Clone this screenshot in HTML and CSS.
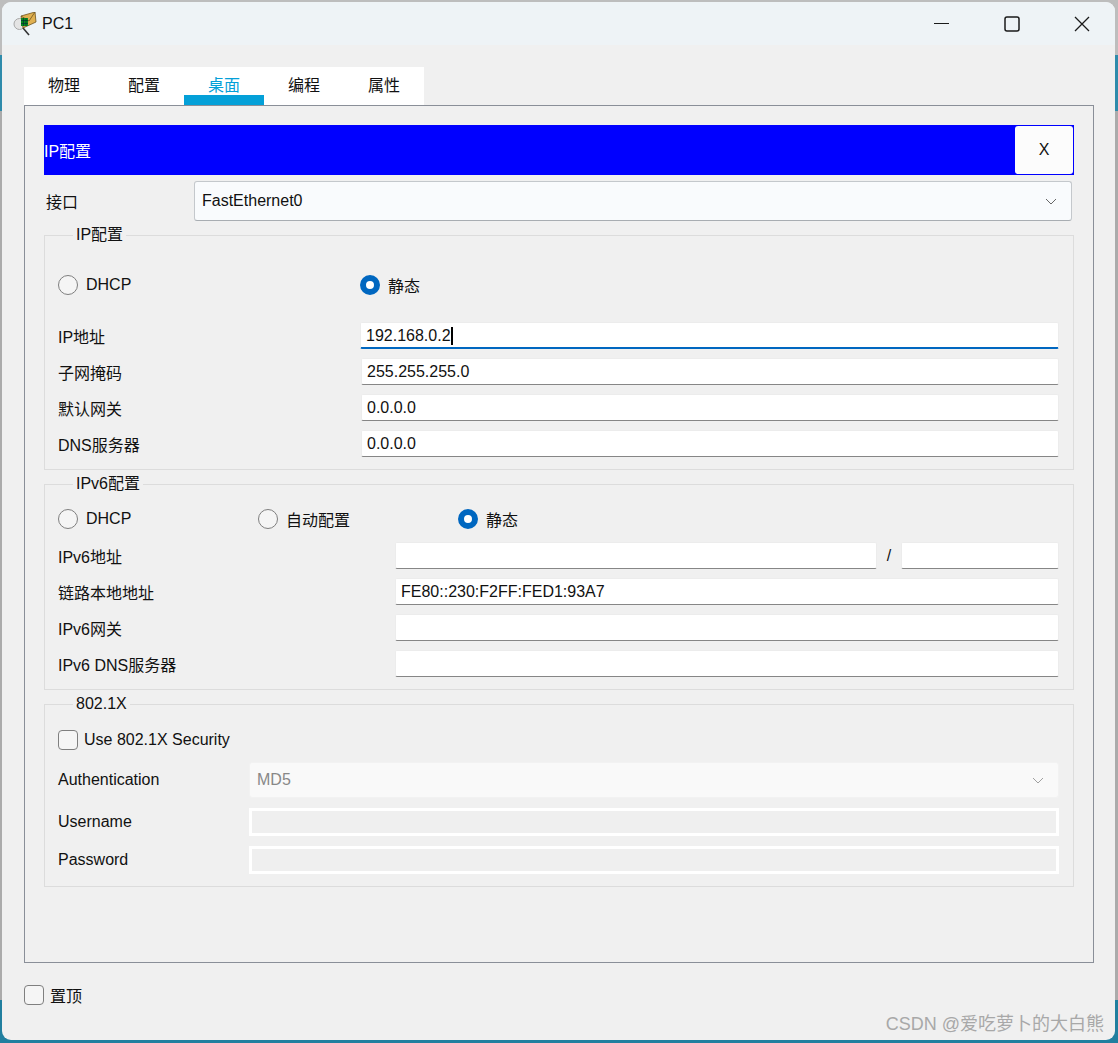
FILE: index.html
```html
<!DOCTYPE html>
<html lang="zh-CN">
<head>
  <meta charset="UTF-8">
  <title>PC1</title>
  <link rel="stylesheet" href="styles.css">
</head>
<body>

  <div class="window">

    <!-- title bar -->
    <div class="titlebar">
      <svg class="app-icon" width="24" height="24" viewBox="0 0 24 24">
        <circle cx="6.5" cy="12" r="5.5" fill="#e4e4e4" stroke="#a8a8a8"/>
        <path d="M10 16l6 7" stroke="#333" stroke-width="1.6"/>
        <path d="M8 4l14-4 1 10-13 6z" fill="#e0b050" stroke="#6d5320" stroke-width="0.8"/>
        <path d="M8 4l8 5 6-9" fill="none" stroke="#6d5320" stroke-width="0.8"/>
        <path d="M8 6h7v8H8z" fill="#0a8a1e"/>
        <path d="M10.5 6v8M13 6v8M8 8.5h7M8 11.5h7" stroke="#033" stroke-width="0.7"/>
      </svg>
      <span class="title">PC1</span>
      <div class="controls">
        <svg width="16" height="16" viewBox="0 0 16 16"><path d="M0 7.5h15" stroke="#1a1a1a" stroke-width="1.2"/></svg>
        <svg width="16" height="16" viewBox="0 0 16 16"><rect x="1" y="1" width="14" height="14" rx="2" fill="none" stroke="#1a1a1a" stroke-width="1.5"/></svg>
        <svg width="16" height="16" viewBox="0 0 16 16"><path d="M1 1l14 14M15 1L1 15" stroke="#1a1a1a" stroke-width="1.3"/></svg>
      </div>
    </div>

    <div class="content">
      <!-- tabs -->
      <div class="tabs">
        <div class="tab">物理</div>
        <div class="tab">配置</div>
        <div class="tab active">桌面</div>
        <div class="tab">编程</div>
        <div class="tab">属性</div>
      </div>

      <div class="panel">
        <div class="bar">
          <span>IP配置</span>
          <div class="bar-close">X</div>
        </div>

        <div class="iface-row">
          <span class="iface-label">接口</span>
          <div class="select iface-select">
            <span>FastEthernet0</span>
            <svg width="12" height="7" viewBox="0 0 12 7"><path d="M1 1l5 5 5-5" fill="none" stroke="#666" stroke-width="1"/></svg>
          </div>
        </div>

        <!-- IPv4 -->
        <fieldset class="group group-ip">
          <legend>IP配置</legend>
          <div class="radios">
            <label class="radio radio-dhcp"><i class="dot"></i>DHCP</label>
            <label class="radio"><i class="dot on"></i>静态</label>
          </div>
          <div class="rows">
            <div class="row">
              <span>IP地址</span>
              <div class="input focused">192.168.0.2<i class="caret"></i></div>
            </div>
            <div class="row">
              <span>子网掩码</span>
              <div class="input">255.255.255.0</div>
            </div>
            <div class="row">
              <span>默认网关</span>
              <div class="input">0.0.0.0</div>
            </div>
            <div class="row">
              <span>DNS服务器</span>
              <div class="input">0.0.0.0</div>
            </div>
          </div>
        </fieldset>

        <!-- IPv6 -->
        <fieldset class="group group-ip6">
          <legend>IPv6配置</legend>
          <div class="radios radios-ip6">
            <label class="radio"><i class="dot"></i>DHCP</label>
            <label class="radio"><i class="dot"></i>自动配置</label>
            <label class="radio"><i class="dot on"></i>静态</label>
          </div>
          <div class="rows">
            <div class="row row-ip6">
              <span>IPv6地址</span>
              <div class="input"></div>
              <span class="slash">/</span>
              <div class="input"></div>
            </div>
            <div class="row row-ip6">
              <span>链路本地地址</span>
              <div class="input wide">FE80::230:F2FF:FED1:93A7</div>
            </div>
            <div class="row row-ip6">
              <span>IPv6网关</span>
              <div class="input wide"></div>
            </div>
            <div class="row row-ip6">
              <span>IPv6 DNS服务器</span>
              <div class="input wide"></div>
            </div>
          </div>
        </fieldset>

        <!-- 802.1X -->
        <fieldset class="group group-dot1x">
          <legend>802.1X</legend>
          <label class="check"><i class="box"></i>Use 802.1X Security</label>
          <div class="auth-row">
            <span>Authentication</span>
            <div class="select disabled">
              <span>MD5</span>
              <svg width="12" height="7" viewBox="0 0 12 7"><path d="M1 1l5 5 5-5" fill="none" stroke="#a0a0a0" stroke-width="1"/></svg>
            </div>
          </div>
          <div class="auth-row short">
            <span>Username</span>
            <div class="input-off"></div>
          </div>
          <div class="auth-row short">
            <span>Password</span>
            <div class="input-off"></div>
          </div>
        </fieldset>
      </div>

      <label class="check footer-check"><i class="box"></i>置顶</label>
    </div>
  </div>

  <div class="watermark">CSDN @爱吃萝卜的大白熊</div>

</body>
</html>
```

FILE: styles.css
```css
html, body { margin: 0; height: 100%; }
body { box-sizing: border-box; width: 1118px; height: 1043px; padding: 2px 3px 3px 2px; overflow: hidden; position: relative; font-family: "Liberation Sans", "Noto Sans CJK SC", sans-serif; font-size: 16px; color: #111; background: linear-gradient(#bdbdbd 0, #bdbdbd 55px, #2f8bab 55px, #2f8bab 111px, #ababab 111px, #ababab 1000px, #217f9f 1000px); }

.window { box-sizing: border-box; height: 100%; display: flex; flex-direction: column; background: #f0f0f0; border-radius: 9px; overflow: hidden; }

.titlebar { height: 43px; flex: none; display: flex; align-items: center; background: #eef3f6; padding-left: 11px; }
.app-icon { margin-right: 5px; }
.title { font-size: 16px; }
.controls { margin-left: auto; display: flex; gap: 54px; padding-right: 25px; }
.controls svg { display: block; }

.content { flex: 1; display: flex; flex-direction: column; padding: 22px 21px 33px 22px; min-height: 0; }

.tabs { display: flex; align-self: flex-start; background: #fff; height: 38px; flex: none; }
.tab { box-sizing: border-box; width: 80px; text-align: center; line-height: 38px; }
.tab.active { color: #04a0d8; border-bottom: 10px solid #04a0d8; }

.panel { flex: 1; box-sizing: border-box; border: 1px solid #8a8f98; padding: 19px 19px 0; min-height: 0; }

.bar { height: 50px; display: flex; align-items: center; justify-content: space-between; background: #0000ff; color: #fff; }
.bar-close { box-sizing: border-box; width: 58px; height: 48px; margin-right: 1px; background: #fcfcfc; color: #111; border-radius: 3px; display: flex; align-items: center; justify-content: center; }

.iface-row { display: flex; align-items: center; margin-top: 6px; padding-left: 2px; }
.iface-label { width: 148px; }

.select { box-sizing: border-box; display: flex; align-items: center; justify-content: space-between; padding: 0 14px 0 7px; border-radius: 3px; }
.iface-select { width: 878px; height: 40px; background: #f9fbfd; border: 1px solid #c4c8cc; border-bottom-color: #a8adb2; }
.select.disabled { flex: 1; height: 36px; background: #f9f9f9; color: #888; border: 1px solid #f2f2f2; }

.group { margin: 4px 0 0; padding: 0 14px 12px 13px; border: 1px solid #dcdcdc; min-width: 0; }
.group legend { margin-left: 15px; padding: 0 3px; line-height: 20px; height: 20px; }
.group-ip6 { margin-top: 4px; }
.group-dot1x { margin-top: 4px; }

.radios { display: flex; margin-top: 30px; height: 20px; }
.radio { display: flex; align-items: center; gap: 8px; }
.radio-dhcp { width: 302px; }
.radios-ip6 { margin-top: 15px; }
.radios-ip6 .radio { width: 200px; }

.dot { box-sizing: border-box; width: 20px; height: 20px; border-radius: 50%; border: 1px solid #7f7f7f; background: #f5f5f5; flex: none; }
.dot.on { border: 6px solid #0067c0; background: #fff; }

.rows { display: flex; flex-direction: column; gap: 9px; margin-top: 27px; }
.row { display: grid; grid-template-columns: 303px 1fr; align-items: center; height: 27px; }
.radios-ip6 + .rows { margin-top: 13px; }
.row-ip6 { grid-template-columns: 337px 482px 24px 158px; }

.input { box-sizing: border-box; height: 27px; line-height: 26px; padding: 0 5px; background: #fff; border: 1px solid #ececec; border-bottom-color: #868686; border-radius: 2px; white-space: nowrap; }
.input.wide { grid-column: 2 / 5; }
.input.focused { margin-left: -1px; border-bottom: 2px solid #0067c0; }
.caret { display: inline-block; width: 2px; height: 18px; background: #000; vertical-align: -4px; }
.slash { text-align: center; }

.check { display: flex; align-items: center; gap: 6px; }
.box { box-sizing: border-box; width: 20px; height: 20px; border: 1px solid #7f7f7f; border-radius: 4px; background: #f5f5f5; flex: none; }
.group-dot1x .check { margin-top: 16px; }

.auth-row { display: grid; grid-template-columns: 191px 1fr; align-items: center; margin-top: 12px; }
.auth-row.short { margin-top: 10px; }
.input-off { box-sizing: border-box; height: 28px; background: #efefef; border: 3px solid #fff; }

.footer-check { margin-top: 20px; }

.watermark { position: absolute; right: 14px; bottom: 8px; font-size: 18px; color: #a8a8a8; white-space: nowrap; }
```
